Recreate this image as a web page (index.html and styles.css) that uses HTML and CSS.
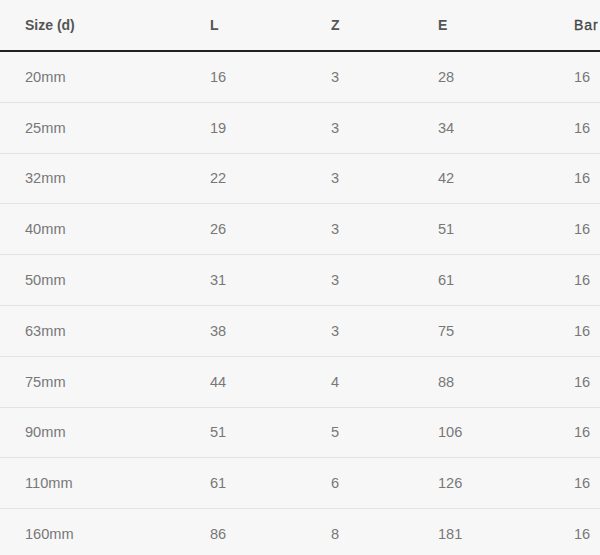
FILE: index.html
```html
<!DOCTYPE html>
<html>
<head>
<meta charset="utf-8">
<link rel="stylesheet" href="styles.css">
</head>
<body>
<div class="wrap">
<table class="spec">
  <colgroup>
    <col class="c1"><col class="c2"><col class="c3"><col class="c4"><col class="c5">
  </colgroup>
  <thead>
    <tr><th>Size (d)</th><th>L</th><th>Z</th><th>E</th><th class="bar">Bar</th></tr>
  </thead>
  <tbody>
    <tr><td>20mm</td><td>16</td><td>3</td><td>28</td><td>16</td></tr>
    <tr><td>25mm</td><td>19</td><td>3</td><td>34</td><td>16</td></tr>
    <tr><td>32mm</td><td>22</td><td>3</td><td>42</td><td>16</td></tr>
    <tr><td>40mm</td><td>26</td><td>3</td><td>51</td><td>16</td></tr>
    <tr><td>50mm</td><td>31</td><td>3</td><td>61</td><td>16</td></tr>
    <tr><td>63mm</td><td>38</td><td>3</td><td>75</td><td>16</td></tr>
    <tr><td>75mm</td><td>44</td><td>4</td><td>88</td><td>16</td></tr>
    <tr><td>90mm</td><td>51</td><td>5</td><td>106</td><td>16</td></tr>
    <tr><td>110mm</td><td>61</td><td>6</td><td>126</td><td>16</td></tr>
    <tr><td>160mm</td><td>86</td><td>8</td><td>181</td><td>16</td></tr>
  </tbody>
</table>
</div>
</body>
</html>
```
FILE: styles.css
```css
html, body {
  margin: 0;
  padding: 0;
  background: #f7f7f7;
}
body {
  font-family: "Liberation Sans", Arial, sans-serif;
}
.wrap {
  width: 600px;
  height: 555px;
  overflow: hidden;
}
.spec {
  border-collapse: collapse;
  table-layout: fixed;
  width: 680px;
}
.c1 { width: 210px; }
.c2 { width: 121px; }
.c3 { width: 107px; }
.c4 { width: 136px; }
.c5 { width: 106px; }
.spec th, .spec td {
  text-align: left;
  padding: 0;
  white-space: nowrap;
}
.spec th:first-child, .spec td:first-child {
  padding-left: 25px;
}
.spec th {
  height: 50px;
  font-size: 14px;
  font-weight: bold;
  color: #555;
  border-bottom: 2px solid #222;
}
.spec th.bar {
  letter-spacing: 1px;
  font-weight: normal;
  color: #444;
  -webkit-text-stroke: 0.3px #444;
}
.spec td {
  height: 49.8px;
  font-size: 14.6px;
  color: #777;
  border-bottom: 1px solid #e3e3e3;
}
```
